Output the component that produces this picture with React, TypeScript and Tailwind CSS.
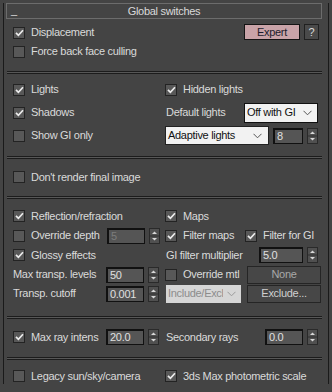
import React from "react";

const Check = ({ on }: { on?: boolean }) => (
  <span className="w-[12px] h-[12px] border border-[#232323] bg-[#585858] flex items-center justify-center shrink-0">
    {on && (
      <svg width="9" height="8" viewBox="0 0 9 8">
        <path d="M1 3.8 L3.4 6.3 L8 1.2" stroke="#ececec" strokeWidth="1.7" fill="none" />
      </svg>
    )}
  </span>
);

const CB = ({ on, label, className = "" }: { on?: boolean; label: string; className?: string }) => (
  <div className={`flex items-center gap-[6px] whitespace-nowrap ${className}`}>
    <Check on={on} />
    <span>{label}</span>
  </div>
);

const Arrows = () => (
  <svg width="11" height="16" viewBox="0 0 11 16" className="shrink-0">
    <rect x="0.5" y="0.5" width="10" height="15" fill="#505050" stroke="#2a2a2a" />
    <line x1="1" y1="8" x2="10" y2="8" stroke="#2e2e2e" />
    <path d="M3 6 L5.5 3.5 L8 6 Z" fill="#d8d8d8" />
    <path d="M3 10 L5.5 12.5 L8 10 Z" fill="#d8d8d8" />
  </svg>
);

const Spin = ({ v, w, dim }: { v: string; w: string; dim?: boolean }) => (
  <div className="flex items-center gap-[4px]">
    <div
      className={`${w} h-[16px] border-t-2 border-l-2 border-b border-r border-[#111111] bg-[#555555] pl-[2px] flex items-center leading-none ${
        dim ? "text-[#7c7c7c]" : "text-[#e0e0e0]"
      }`}
    >
      {v}
    </div>
    <Arrows />
  </div>
);

const Chevron = ({ c = "#555" }: { c?: string }) => (
  <svg width="9" height="6" viewBox="0 0 9 6" className="shrink-0">
    <path d="M0.5 0.8 L4.5 4.8 L8.5 0.8" stroke={c} strokeWidth="1" fill="none" />
  </svg>
);

const Sep = ({ mt }: { mt: string }) => (
  <div className={`${mt} ml-[3px] w-[315px] h-[3px] border-t border-b border-[#1c1c1c] bg-[#575757]`} />
);

export default function App() {
  return (
    <div
      className="w-[332px] h-[392px] bg-[#444444] overflow-hidden text-[11px] tracking-[-0.3px] text-[#dadada]"
      style={{ fontFamily: '"Liberation Sans", Arial, sans-serif' }}
    >
      <div className="mt-[11px] ml-[3px] w-[326px] h-[381px] border-l border-r border-[#1a1a1a]">
        {/* title */}
        <div className="-mt-[8px] ml-[2px] w-[316px] h-[16px] border border-[#6c6c6c] bg-[#444444] relative flex items-center justify-center">
          <span className="absolute left-[4px] top-[1px] leading-none">_</span>
          <span className="leading-none">Global switches</span>
        </div>

        {/* section 1 */}
        <div className="mt-[4px] pl-[9px] pr-[9px] flex">
          <div className="w-[153px] flex flex-col">
            <CB on label="Displacement" className="h-[19px]" />
            <CB label="Force back face culling" className="h-[19px]" />
          </div>
          <div className="flex-1 flex justify-end items-start gap-[4px] pt-[1px]">
            <div className="w-[56px] h-[16px] border border-[#141414] bg-[#c9a3a8] text-[#1c1c2c] flex items-center justify-center leading-none">
              Expert
            </div>
            <div className="w-[15px] h-[16px] border border-[#202020] bg-[#4a4a4a] flex items-center justify-center leading-none">
              ?
            </div>
          </div>
        </div>

        <Sep mt="mt-[10px]" />

        {/* section 2 */}
        <div className="mt-[4px] pl-[9px] pr-[10px] flex">
          <div className="w-[153px] flex flex-col">
            <CB on label="Lights" className="h-[23px]" />
            <CB on label="Shadows" className="h-[23px]" />
            <CB label="Show GI only" className="h-[23px]" />
          </div>
          <div className="flex-1 flex flex-col">
            <CB on label="Hidden lights" className="h-[23px] -ml-[1px]" />
            <div className="h-[23px] flex items-center justify-between">
              <span>Default lights</span>
              <div className="w-[74px] h-[20px] border border-[#111] bg-[#f2f2f2] text-[#111] flex items-center pl-[2px] pr-[5px] overflow-hidden whitespace-nowrap">
                <span className="w-[56px] overflow-hidden">Off with GI</span>
                <span className="flex-1" />
                <Chevron />
              </div>
            </div>
            <div className="h-[23px] flex items-center justify-between -ml-[1px]">
              <div className="w-[104px] h-[19px] border border-[#222] bg-[#f2f2f2] text-[#111] flex items-center pl-[2px] pr-[6px]">
                <span className="flex-1">Adaptive lights</span>
                <Chevron />
              </div>
              <Spin v="8" w="w-[30px]" />
            </div>
          </div>
        </div>

        <Sep mt="mt-[9px]" />

        <div className="mt-[8px] pl-[9px] h-[20px] flex items-center">
          <CB label="Don't render final image" />
        </div>

        <Sep mt="mt-[9px]" />

        {/* section 4 */}
        <div className="mt-[7px] pl-[9px] pr-[10px] flex">
          <div className="w-[153px] flex flex-col">
            <CB on label="Reflection/refraction" className="h-[20px]" />
            <div className="h-[19px] flex items-center">
              <div className="w-[94px]">
                <CB label="Override depth" />
              </div>
              <Spin v="5" w="w-[38px]" dim />
            </div>
            <CB on label="Glossy effects" className="h-[20px]" />
            <div className="h-[19px] flex items-center">
              <span className="w-[93px] whitespace-nowrap">Max transp. levels</span>
              <Spin v="50" w="w-[38px]" />
            </div>
            <div className="h-[19px] flex items-center">
              <span className="w-[93px] whitespace-nowrap">Transp. cutoff</span>
              <Spin v="0.001" w="w-[38px]" />
            </div>
          </div>
          <div className="flex-1 flex flex-col">
            <CB on label="Maps" className="h-[20px] -ml-[1px]" />
            <div className="h-[19px] flex items-center -ml-[1px]">
              <CB on label="Filter maps" className="w-[80px]" />
              <CB on label="Filter for GI" />
            </div>
            <div className="h-[20px] flex items-center justify-between">
              <span className="whitespace-nowrap">GI filter multiplier</span>
              <Spin v="5.0" w="w-[44px]" />
            </div>
            <div className="h-[19px] flex items-center -mr-[3px]">
              <CB label="Override mtl" className="w-[82px] -ml-[1px]" />
              <div className="flex-1 h-[18px] border border-[#252525] bg-[#474747] text-[#a9a9a9] flex items-center justify-center leading-none">
                None
              </div>
            </div>
            <div className="h-[19px] flex items-center -mr-[3px]">
              <div className="w-[75px] h-[18px] bg-[#d6d6d6] text-[#8c8c8c] flex items-center pl-[2px] pr-[5px] overflow-hidden whitespace-nowrap">
                <span className="w-[55px] overflow-hidden">Include/Exclude</span>
                <span className="flex-1" />
                <Chevron c="#9a9a9a" />
              </div>
              <div className="ml-[6px] flex-1 h-[18px] border border-[#252525] bg-[#474747] text-[#d0d0d0] flex items-center justify-center leading-none">
                Exclude...
              </div>
            </div>
          </div>
        </div>

        <Sep mt="mt-[13px]" />

        <div className="mt-[8px] pl-[9px] pr-[10px] h-[20px] flex items-center">
          <div className="w-[153px] flex items-center">
            <div className="w-[93px]">
              <CB on label="Max ray intens" />
            </div>
            <Spin v="20.0" w="w-[38px]" />
          </div>
          <div className="flex-1 flex items-center justify-between">
            <span className="whitespace-nowrap">Secondary rays</span>
            <Spin v="0.0" w="w-[38px]" />
          </div>
        </div>

        <Sep mt="mt-[10px]" />

        <div className="mt-[6px] pl-[9px] h-[20px] flex items-center">
          <div className="w-[153px]">
            <CB label="Legacy sun/sky/camera" />
          </div>
          <CB on label="3ds Max photometric scale" className="-ml-[1px]" />
        </div>
      </div>
    </div>
  );
}
